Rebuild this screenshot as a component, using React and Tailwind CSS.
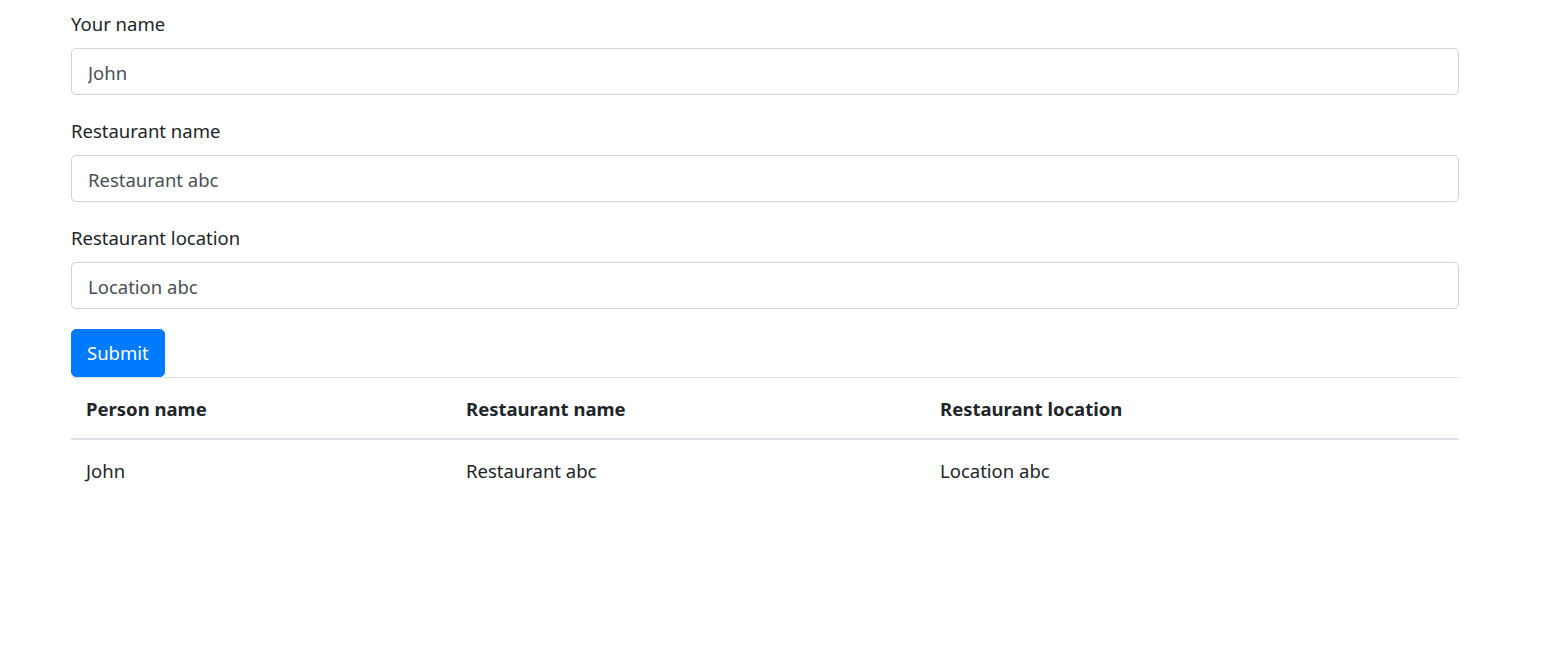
import React, { useState } from 'react';

const fields = [
    { id: 'person', label: 'Your name', placeholder: 'John' },
    { id: 'restaurant', label: 'Restaurant name', placeholder: 'Restaurant abc' },
    { id: 'location', label: 'Restaurant location', placeholder: 'Location abc' },
];

const App = () => {
    const [rows] = useState([
        { person: 'John', restaurant: 'Restaurant abc', location: 'Location abc' },
    ]);

    return (
        <div className="min-h-screen bg-white text-[#212529] text-[18.5px] leading-[30px]" style={{ fontFamily: '"Segoe UI", "Noto Sans", Arial, sans-serif' }}>
            <div className="ml-[71px] w-[1388px] pt-[8px]">
                <form onSubmit={(e) => e.preventDefault()}>
                    {fields.map((f) => (
                        <div key={f.id} className="mb-[20px]">
                            <label htmlFor={f.id} className="block pt-[1px] mb-[8.5px]">{f.label}</label>
                            <input
                                id={f.id}
                                placeholder={f.placeholder}
                                className="block w-full h-[47.5px] px-[16px] pt-[2px] border border-[#ced4da] rounded-[5px] text-[#495057] placeholder:text-[#495057] outline-none"
                            />
                        </div>
                    ))}
                    <button type="submit" className="h-[47.5px] px-[15px] pt-[1px] bg-[#007bff] text-white rounded-[5px] border border-[#007bff]">
                        Submit
                    </button>
                </form>

                {/* Tabelle */}
                <table className="w-full border-collapse">
                    <thead>
                        <tr className="border-t border-[#dee2e6]">
                            <th className="w-[380px] text-left font-bold px-[15px] pt-[16px] pb-[14px] border-b-[2.5px] border-[#dee2e6]">Person name</th>
                            <th className="w-[474px] text-left font-bold px-[15px] pt-[16px] pb-[14px] border-b-[2.5px] border-[#dee2e6]">Restaurant name</th>
                            <th className="text-left font-bold px-[15px] pt-[16px] pb-[14px] border-b-[2.5px] border-[#dee2e6]">Restaurant location</th>
                        </tr>
                    </thead>
                    <tbody>
                        {rows.map((r, i) => (
                            <tr key={i}>
                                <td className="px-[15px] pt-[16px] pb-[14px]">{r.person}</td>
                                <td className="px-[15px] pt-[16px] pb-[14px]">{r.restaurant}</td>
                                <td className="px-[15px] pt-[16px] pb-[14px]">{r.location}</td>
                            </tr>
                        ))}
                    </tbody>
                </table>
            </div>
        </div>
    );
};

export default App;
